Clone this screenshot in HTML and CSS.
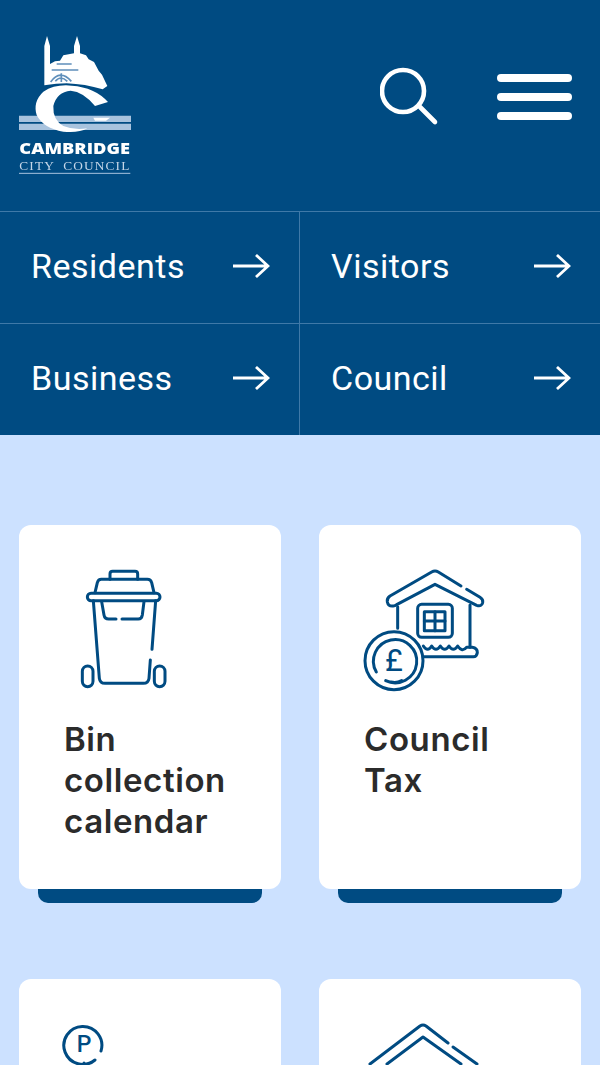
FILE: index.html
```html
<!DOCTYPE html>
<html lang="en">
<head>
    <meta charset="UTF-8">
    <meta name="viewport" content="width=device-width, initial-scale=1.0">
    <title>Cambridge City Council</title>
    <link rel="stylesheet" href="styles.css">
</head>
<body>
    <div class="page">
        <header class="site-header">
            <a class="logo" href="#" aria-label="Cambridge City Council">
                <svg width="112" height="140" viewBox="57 48 336 420">
                    <!-- chapel -->
                    <path fill="#fff" d="M133 192V78L141 48L150 78V132L165 124L180 122L190 106L222 100V78L231 48L240 78V100L258 106L266 118L282 126L296 152L306 164L322 198L308 208Q255 192 200 190Q170 190 133 196Z"/>
                    <path fill="none" stroke="#5f8fbb" stroke-width="5" d="M152 186Q180 146 214 184M166 184Q182 164 202 184M184 186V160M155 150H235M170 132H215"/>
                    <!-- river -->
                    <path fill="#a8c3de" d="M57 287H393V306H57ZM57 311H393V330H57Z"/>
                    <path fill="#fff" d="M280 293H330L318 302H285Z"/>
                    <!-- C -->
                    <path fill="#fff" d="M324 246L285 258Q250 215 212 212Q170 216 160 258Q158 300 190 318Q225 332 262 325Q235 340 190 335Q130 325 110 285Q98 245 130 215Q165 192 215 197Q285 202 324 246Z"/>
                    <text class="logo-name" x="58" y="403" textLength="332" lengthAdjust="spacingAndGlyphs">CAMBRIDGE</text>
                    <text class="logo-city" x="58" y="451" textLength="330" lengthAdjust="spacing">CITY  COUNCIL</text>
                    <path stroke="#a8c3de" stroke-width="3" d="M57 460H391"/>
                </svg>
            </a>
            <div class="header-actions">
                <a class="search-btn" href="#" aria-label="Search">
                    <svg width="60" height="60" viewBox="0 0 60 60" fill="none" stroke="#fff" stroke-linecap="round">
                        <circle cx="23" cy="24" r="21" stroke-width="4.6"/>
                        <path d="M40 40L55 55" stroke-width="4.6"/>
                    </svg>
                </a>
                <button class="menu-btn" type="button" aria-label="Menu">
                    <span></span>
                    <span></span>
                    <span></span>
                </button>
            </div>
        </header>

        <nav class="main-nav">
            <a class="nav-item" href="#">
                <span>Residents</span>
                <svg class="nav-arrow" viewBox="0 0 38 24"><path d="M1 12H36M24 1L36 12L24 23"/></svg>
            </a>
            <a class="nav-item" href="#">
                <span>Visitors</span>
                <svg class="nav-arrow" viewBox="0 0 38 24"><path d="M1 12H36M24 1L36 12L24 23"/></svg>
            </a>
            <a class="nav-item" href="#">
                <span>Business</span>
                <svg class="nav-arrow" viewBox="0 0 38 24"><path d="M1 12H36M24 1L36 12L24 23"/></svg>
            </a>
            <a class="nav-item" href="#">
                <span>Council</span>
                <svg class="nav-arrow" viewBox="0 0 38 24"><path d="M1 12H36M24 1L36 12L24 23"/></svg>
            </a>
        </nav>

        <main class="tasks">
            <a class="task-card" href="#">
                <svg class="task-icon" width="116" height="140" viewBox="12 0 348 420">
                    <path d="M150 58V42Q150 34 158 34H225Q233 34 233 42V58"/>
                    <path d="M105 98L112 68Q115 58 124 58H262Q272 58 275 68L282 98"/>
                    <rect x="82" y="100" width="218" height="22" rx="11"/>
                    <path d="M100 122L118 355Q120 370 135 370H250Q265 370 267 355L271 300M276 268L287 122"/>
                    <path d="M125 125L132 165Q134 177 146 177H168M186 177H235Q245 177 247 165L252 125"/>
                    <rect x="67" y="318" width="32" height="62" rx="16"/>
                    <rect x="283" y="318" width="32" height="62" rx="16"/>
                </svg>
                <h2>Bin collection calendar</h2>
            </a>
            <a class="task-card" href="#">
                <svg class="task-icon" width="131" height="140" viewBox="27 0 393 420">
                    <path d="M318 78L250 36Q240 30 230 36L105 108Q95 115 97 126Q100 140 115 138Q120 138 125 134L240 73L365 136Q380 141 383 128Q385 118 375 112L335 88"/>
                    <path d="M128 140V205M345 135V262"/>
                    <rect x="188" y="133" width="104" height="99" rx="12"/>
                    <rect x="208" y="155" width="62" height="57"/>
                    <path d="M240 155V212M208 183H270"/>
                    <path d="M205 258Q218 278 230 258Q243 278 256 258Q269 278 282 258Q295 278 308 258Q321 278 335 262H352Q367 264 367 278Q365 290 355 290H205"/>
                    <circle cx="117" cy="302" r="87"/>
                    <path d="M64 336A65 65 0 1 1 92 362M108 366Q125 370 140 362"/>
                    <text class="pound" x="117" y="334" text-anchor="middle">£</text>
                </svg>
                <h2>Council<br>Tax</h2>
            </a>
            <a class="task-card" href="#">
                <svg class="task-icon" width="120" height="140" viewBox="0 0 120 140">
                    <path class="thin" d="M37 37A19 19 0 1 0 31 46M20 49V53"/>
                    <text class="parking" x="20" y="37.5" text-anchor="middle">P</text>
                </svg>
            </a>
            <a class="task-card" href="#">
                <svg class="task-icon" width="131" height="140" viewBox="0 0 131 140">
                    <path class="thin" d="M84 29L62 12Q59 10 56 12L6 50M89 33L113 50M23 50L59 23L97 50"/>
                </svg>
            </a>
        </main>
    </div>
</body>
</html>
```

FILE: styles.css
```css
* {
    box-sizing: border-box;
    margin: 0;
    padding: 0;
}

body {
    font-family: Roboto, Arial, sans-serif;
    background: #cce1ff;
}

a {
    color: inherit;
    text-decoration: none;
}

.page {
    height: 1065px;
    overflow: hidden;
}

.site-header {
    display: flex;
    justify-content: space-between;
    align-items: flex-start;
    height: 211px;
    padding: 36px 28px 0 19px;
    background: #004b82;
}

.logo {
    display: block;
}

.logo svg {
    display: block;
    filter: blur(0.4px);
}

.logo-name {
    font-family: "Open Sans", Arial, sans-serif;
    font-size: 46px;
    font-weight: 800;
    fill: #fff;
}

.logo-city {
    font-family: "Liberation Serif", serif;
    font-size: 40px;
    white-space: pre;
    fill: #c4d6e8;
}

.header-actions {
    display: flex;
    align-items: center;
    gap: 57px;
    margin-top: 31px;
}

.search-btn {
    display: block;
    height: 60px;
}

.menu-btn {
    display: flex;
    flex-direction: column;
    gap: 11px;
    width: 75px;
    background: none;
    border: none;
    cursor: pointer;
}

.menu-btn span {
    display: block;
    height: 8px;
    background: white;
    border-radius: 4px;
}

.main-nav {
    display: grid;
    grid-template-columns: 300px 300px;
    background: #004b82;
    color: white;
}

.nav-item {
    display: flex;
    justify-content: space-between;
    align-items: center;
    height: 112px;
    padding: 0 29px 4px 31px;
    border-top: 1px solid #3f79a8;
    font-size: 34px;
    letter-spacing: 0.5px;
}

.nav-item:nth-child(odd) {
    border-right: 1px solid #3f79a8;
}

.nav-arrow {
    width: 38px;
    height: 24px;
    fill: none;
    stroke: white;
    stroke-width: 2.8;
}

.tasks {
    display: grid;
    grid-template-columns: 262px 262px;
    justify-content: space-between;
    row-gap: 90px;
    padding: 90px 19px 0;
}

.task-card {
    position: relative;
    display: block;
    height: 364px;
    padding: 35px 45px 46px;
    background: white;
    border-radius: 12px;
}

.task-card::after {
    content: '';
    position: absolute;
    left: 19px;
    right: 19px;
    bottom: -14px;
    height: 14px;
    background: #004b82;
    border-radius: 0 0 10px 10px;
}

.task-icon {
    display: block;
    margin-bottom: 19px;
    overflow: visible;
    fill: none;
    stroke: #004b82;
    stroke-width: 9;
    stroke-linecap: round;
    stroke-linejoin: round;
}

.task-icon .thin {
    stroke-width: 3;
}

.task-icon text {
    fill: #004b82;
    stroke: none;
    font-family: Roboto, Arial, sans-serif;
}

.pound {
    font-size: 92px;
    font-weight: 400;
}

.parking {
    font-size: 23px;
    font-weight: 500;
}

.task-card h2 {
    font-family: Inter, Arial, sans-serif;
    font-size: 33px;
    font-weight: 600;
    line-height: 41px;
    letter-spacing: 0.6px;
    color: #2b2b2b;
}
```
